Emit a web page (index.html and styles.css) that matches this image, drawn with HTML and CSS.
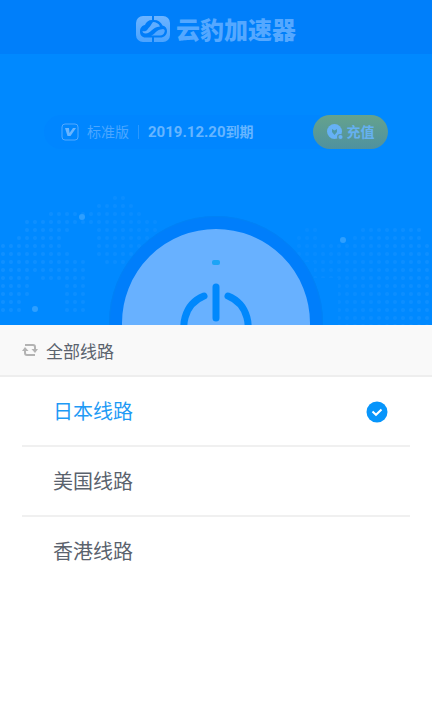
FILE: index.html
```html
<!DOCTYPE html>
<html lang="zh-CN">
<head>
<meta charset="utf-8">
<meta name="viewport" content="width=device-width, initial-scale=1">
<title>云豹加速器</title>
<link rel="stylesheet" href="styles.css">
</head>
<body>
<header class="topbar">
  <svg class="logo" viewBox="0 0 34 26" aria-hidden="true">
    <defs>
      <linearGradient id="logo-fill" x1="0" y1="0" x2="0" y2="1">
        <stop offset="0" stop-color="#6db4ff"/>
        <stop offset="1" stop-color="#4ba3ff"/>
      </linearGradient>
    </defs>
    <rect width="34" height="26" rx="7" fill="url(#logo-fill)"/>
    <path d="M16 0h2v4c4 0 7 2 8.500 5.500 3 .5 4.500 3 4.500 5.500 0 4-3 6.500-6.500 6.500H18V26h-2v-4.500H9.500C6 21.500 4 19 4 15.500s2-6 5-6.500c1-3 3.500-5 7-5z" fill="#007df9"/>
    <path d="M17 6c3 0 6 1.500 7 4.500-8 .5-9 7-14.500 7-2 0-3-1-3-2.500 4.500 1 4.500-1.500 7-4 1.500-2 2-3 3.500-5z" fill="#60adff"/>
    <path d="M15 19.500c4-1 5-6 12-6.500 2 .5 2 2 1.500 3-.5 2-2 3.500-4.500 3.500z" fill="#53a6ff"/>
  </svg>
  <h1 class="brand">云豹加速器</h1>
</header>

<main>
<section class="hero">
  <svg class="map" viewBox="0 0 432 140" preserveAspectRatio="xMidYMax slice" aria-hidden="true">
    <defs>
      <pattern id="dots" width="8" height="8" x="-1" y="1" patternUnits="userSpaceOnUse">
        <circle cx="4" cy="4" r="2" fill="#1090ff"/>
      </pattern>
      <linearGradient id="fade" x1="0" x2="1" y1="0" y2="0">
        <stop offset="0" stop-color="#fff"/>
        <stop offset=".4" stop-color="#777"/>
        <stop offset=".7" stop-color="#666"/>
        <stop offset="1" stop-color="#ddd"/>
      </linearGradient>
      <mask id="map-mask"><rect width="432" height="140" fill="url(#fade)"/></mask>
    </defs>
    <g fill="url(#dots)" mask="url(#map-mask)">
      <path d="M0 57h15v-8h8v-16h24v-8h48v-8h16v-8h16v8h8v8h8v8h16v24h-16v24h-40v-8h-8v-32h-24v8h-8v16h8v8h16v56h-24v-32h-24v-8h-8v24h-8v16h-24v16H0z"/>
      <path d="M296 49h8v-8h16v16h32v-8h8v-8h64v16h8v84h-94v-48h-24v-16h-18z"/>
    </g>
    <g fill="#2e9fff">
      <circle cx="82" cy="32" r="3"/>
      <circle cx="35" cy="124" r="3"/>
      <circle cx="343" cy="55" r="3"/>
    </g>
  </svg>

  <div class="plan">
    <svg class="plan-icon" viewBox="0 0 18 18" aria-hidden="true">
      <rect x="1" y="1" width="16" height="16" rx="3" fill="none" stroke="#52a9ff"/>
      <path d="M4 5h4l.5 5L12 5h3l-5.500 8h-3z" fill="#69b5ff"/>
    </svg>
    <span class="plan-name">标准版</span>
    <span class="plan-expiry"><time class="plan-date" datetime="2019-12-20">2019.12.20</time>到期</span>
    <button class="recharge" type="button">
      <svg class="recharge-icon" viewBox="0 0 16 16" aria-hidden="true">
        <circle cx="7.500" cy="7.500" r="7.500" fill="#66b1f5"/>
        <path d="M5 5l2.500 1.500L10 5v3L7.500 11 5 8z" fill="#4d98a6"/>
        <circle cx="13" cy="13" r="3" fill="#5a98a0"/>
        <circle cx="13.500" cy="13" r="2" fill="#66b1f5"/>
      </svg>
      充值
    </button>
  </div>

  <button class="power" type="button" aria-label="连接">
    <svg viewBox="0 0 188 188" aria-hidden="true">
      <rect x="90" y="31" width="8" height="5" rx="2" fill="#1ca4f6"/>
      <g fill="none" stroke="#0088fc" stroke-width="7" stroke-linecap="round">
        <path d="M94 58v31"/>
        <path d="M82 67a32 32 0 1 0 24 0"/>
      </g>
    </svg>
  </button>
</section>

<section class="sheet">
  <header class="sheet-head">
    <svg class="refresh" viewBox="0 0 16 14" fill="none" stroke="#b3b3b3" stroke-width="2" aria-hidden="true">
      <path d="M3 2h8q2 0 2 2v3M13 12H5q-2 0-2-2V7"/>
      <path d="M9.500 6H16l-3 4zM0 8h6.500L3 4z" fill="#b3b3b3" stroke="none"/>
    </svg>
    <h2 class="sheet-title">全部线路</h2>
  </header>
  <div class="routes" role="radiogroup" aria-label="全部线路">
    <label class="route">
      <input class="route-input" type="radio" name="route" checked>
      <span class="route-name">日本线路</span>
      <svg class="route-check" viewBox="0 0 22 22" aria-hidden="true">
        <circle cx="11" cy="11" r="10.500" fill="#0795fb"/>
        <path d="M6.500 10.500l3.500 3.300 5.500-5.300" fill="none" stroke="#fff" stroke-width="2"/>
      </svg>
    </label>
    <label class="route">
      <input class="route-input" type="radio" name="route">
      <span class="route-name">美国线路</span>
      <svg class="route-check" viewBox="0 0 22 22" aria-hidden="true">
        <circle cx="11" cy="11" r="10.500" fill="#0795fb"/>
        <path d="M6.500 10.500l3.500 3.300 5.500-5.300" fill="none" stroke="#fff" stroke-width="2"/>
      </svg>
    </label>
    <label class="route">
      <input class="route-input" type="radio" name="route">
      <span class="route-name">香港线路</span>
      <svg class="route-check" viewBox="0 0 22 22" aria-hidden="true">
        <circle cx="11" cy="11" r="10.500" fill="#0795fb"/>
        <path d="M6.500 10.500l3.500 3.300 5.500-5.300" fill="none" stroke="#fff" stroke-width="2"/>
      </svg>
    </label>
  </div>
</section>
</main>
</body>
</html>
```

FILE: styles.css
```css
* {
  box-sizing: border-box;
}

body {
  margin: 0;
  background: #fff;
  font-family: Roboto, "Noto Sans CJK SC", sans-serif;
}

.topbar {
  display: flex;
  align-items: center;
  justify-content: center;
  gap: 6px;
  height: 54px;
  padding-top: 3px;
  background: #007ffa;
}

.logo {
  width: 34px;
  height: 26px;
}

.brand {
  margin: 0;
  padding-top: 4px;
  color: #55a8ff;
  font-size: 24px;
  font-weight: 900;
  line-height: 26px;
}

.hero {
  position: relative;
  display: flex;
  flex-direction: column;
  align-items: center;
  gap: 67px;
  height: 271px;
  padding: 61px 44px 0;
  overflow: hidden;
  background: #0089ff;
}

.map {
  position: absolute;
  bottom: 0;
  left: 0;
  width: 100%;
  height: 140px;
}

.plan {
  display: flex;
  align-items: center;
  align-self: stretch;
  flex: none;
  height: 34px;
  padding-left: 17px;
  border-radius: 17px;
  background: #0086ff;
}

.plan-icon {
  width: 18px;
  height: 18px;
}

.plan-name {
  margin-left: 8px;
  padding-right: 9px;
  border-right: 1px solid #2a98ff;
  color: #4ba6ff;
  font-size: 14px;
  line-height: 14px;
}

.plan-expiry {
  margin-left: 9px;
  color: #66b5ff;
  font-size: 14px;
  font-weight: 700;
  line-height: 20px;
}

.plan-date {
  font-size: 15px;
}

.recharge {
  display: flex;
  align-items: center;
  justify-content: center;
  gap: 4px;
  width: 75px;
  height: 34px;
  margin-left: auto;
  padding: 0;
  border: 0;
  border-radius: 17px;
  background: linear-gradient(#65a28d, #4f919f);
  color: #66b1f0;
  font: 700 14px/20px Roboto, "Noto Sans CJK SC", sans-serif;
}

.recharge-icon {
  width: 16px;
  height: 16px;
}

.power {
  position: relative;
  flex: none;
  width: 214px;
  height: 214px;
  padding: 0;
  border: 13px solid #007efb;
  border-radius: 50%;
  outline: 1px solid #0083f6;
  outline-offset: -1px;
  background: #68b1ff;
}

.power svg {
  display: block;
  width: 100%;
}

.sheet-head {
  display: flex;
  align-items: center;
  gap: 8px;
  height: 52px;
  padding: 0 22px;
  border-bottom: 2px solid #eee;
  background: #f9f9f9;
}

.refresh {
  width: 16px;
  height: 14px;
}

.sheet-title {
  margin: 0;
  padding-top: 3px;
  color: #5a626d;
  font-size: 17px;
  font-weight: 400;
  line-height: 24px;
}

.routes {
  margin: 0 22px;
}

.route {
  display: flex;
  align-items: center;
  justify-content: space-between;
  padding: 21px 22px 19px 31px;
  cursor: pointer;
}

.route + .route {
  border-top: 2px solid #f0f0f0;
}

.route-input {
  position: absolute;
  opacity: 0;
}

.route-name {
  color: #5a626d;
  font-size: 20px;
  line-height: 28px;
}

.route-check {
  width: 22px;
  height: 22px;
  visibility: hidden;
}

.route-input:checked ~ .route-name {
  color: #1e9af5;
}

.route-input:checked ~ .route-check {
  visibility: visible;
}
```
